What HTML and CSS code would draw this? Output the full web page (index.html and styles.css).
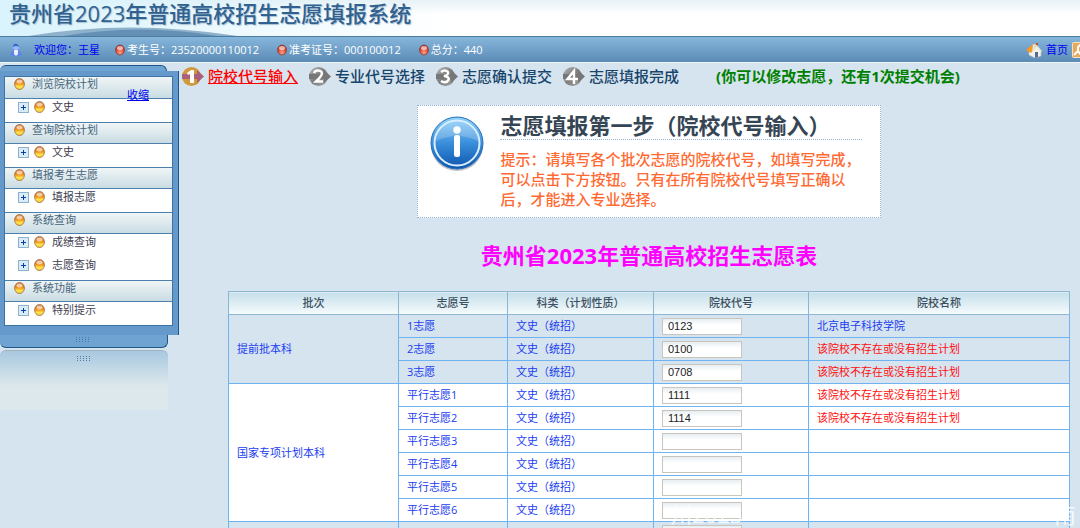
FILE: index.html
```html
<!DOCTYPE html>
<html lang="zh-CN">
<head>
    <meta charset="UTF-8">
    <title>贵州省2023年普通高校招生志愿填报系统</title>
    <link rel="stylesheet" href="styles.css">
</head>
<body>

    <!-- shared icons -->
    <svg class="defs" width="0" height="0" aria-hidden="true">
        <defs>
            <radialGradient id="redFill" cx="50%" cy="75%" r="75%">
                <stop offset="0" stop-color="#ffa48e"/><stop offset="0.5" stop-color="#e0523c"/><stop offset="1" stop-color="#a8281c"/>
            </radialGradient>
            <linearGradient id="goldFill" x1="0" y1="0" x2="0" y2="1">
                <stop offset="0" stop-color="#c96a2c"/><stop offset="0.45" stop-color="#f08c10"/><stop offset="0.75" stop-color="#ffe850"/><stop offset="1" stop-color="#f8c030"/>
            </linearGradient>
            <linearGradient id="blueFill" x1="0" y1="0" x2="0" y2="1">
                <stop offset="0" stop-color="#8fd2fb"/><stop offset="0.5" stop-color="#3a8edb"/><stop offset="1" stop-color="#0d55ad"/>
            </linearGradient>
            <linearGradient id="grayFill" x1="0" y1="0" x2="1" y2="1">
                <stop offset="0" stop-color="#b5b5b5"/><stop offset="0.5" stop-color="#7d7d7d"/><stop offset="1" stop-color="#a5a5a5"/>
            </linearGradient>
            <symbol id="redDot" viewBox="0 0 10 12">
                <ellipse cx="5" cy="6" rx="4.5" ry="5" fill="url(#redFill)" stroke="#8d3a34" stroke-width="0.7"/>
                <ellipse cx="5" cy="4" rx="3" ry="2" fill="#fff" opacity="0.6"/>
            </symbol>
            <symbol id="goldDot" viewBox="0 0 11 12">
                <ellipse cx="5.5" cy="6" rx="4.9" ry="5.5" fill="url(#goldFill)" stroke="#9a6a48" stroke-width="0.8"/>
                <ellipse cx="5.5" cy="3.6" rx="3" ry="2" fill="#fff" opacity="0.6"/>
            </symbol>
            <symbol id="plus" viewBox="0 0 11 11">
                <rect x="0.5" y="0.5" width="10" height="10" fill="#d8ecf8" stroke="#8fb2cc"/>
                <path d="M5.5 3v5M3 5.5h5" stroke="#0b3fa5"/>
            </symbol>
        </defs>
    </svg>

    <header class="banner">
        <svg class="hill" viewBox="0 0 210 9" preserveAspectRatio="none" aria-hidden="true">
            <path d="M0 9Q100-8 210 9z" fill="#8fb2cc"/>
            <path d="M35 9Q112-4 190 9z" fill="#6590b5"/>
        </svg>
        <h1>贵州省2023年普通高校招生志愿填报系统</h1>
    </header>

    <div class="userbar">
        <svg width="14" height="14" viewBox="0 0 14 14" aria-hidden="true">
            <path d="M1 12Q2 7 7 6Q12 7 13 12Q7 15 1 12z" fill="#5f86e8"/>
            <circle cx="7" cy="4" r="3" fill="#9db8f7"/>
            <path d="M4 4Q4 0 8 1Q10 2 10 4Q7 2 4 4z" fill="#3c62cf"/>
            <path d="M5 7h4v4l-2 2-2-2z" fill="#e8f1ff"/>
        </svg>
        <span class="welcome">欢迎您：王星</span>
        <span class="info"><svg width="10" height="12"><use href="#redDot"/></svg>考生号：23520000110012</span>
        <span class="info"><svg width="10" height="12"><use href="#redDot"/></svg>准考证号：000100012</span>
        <span class="info"><svg width="10" height="12"><use href="#redDot"/></svg>总分：440</span>
        <nav class="userlinks">
            <svg width="16" height="16" viewBox="0 0 16 16" aria-hidden="true">
                <path d="M3 8l7-5 5 6v5l-6 2-6-3z" fill="#f1f1ec" stroke="#b9bcb8" stroke-width="0.5"/>
                <path d="M0 8L7 2l4 1-6 8z" fill="#f59b22"/>
                <path d="M10 1h2v4l-2-1z" fill="#c1502a"/>
                <path d="M7 2l4 1 5 6-1 1-5-6-4 6z" fill="#e2e2dd"/>
                <path d="M9 10h3v5l-3 1z" fill="#546b93"/>
            </svg>
            <a href="#">首页</a>
            <svg width="16" height="16" viewBox="0 0 16 16" aria-hidden="true">
                <rect x="0.5" y="0.5" width="15" height="15" rx="1" fill="#e7a95c" stroke="#f5e3c8"/>
                <path d="M2 13l4-4V5l2-2h4M6 9l3 4" fill="none" stroke="#fff" stroke-width="2"/>
            </svg>
        </nav>
    </div>

    <div class="page">
        <aside class="sidebar">
            <div class="side-top"></div>
            <div class="side-body">
                <a class="collapse" href="#">收缩</a>
                <ul class="menu">
                    <li class="group"><svg width="11" height="12"><use href="#goldDot"/></svg>浏览院校计划</li>
                    <li class="item"><svg width="11" height="11"><use href="#plus"/></svg><svg width="11" height="12"><use href="#goldDot"/></svg>文史</li>
                    <li class="group"><svg width="11" height="12"><use href="#goldDot"/></svg>查询院校计划</li>
                    <li class="item"><svg width="11" height="11"><use href="#plus"/></svg><svg width="11" height="12"><use href="#goldDot"/></svg>文史</li>
                    <li class="group"><svg width="11" height="12"><use href="#goldDot"/></svg>填报考生志愿</li>
                    <li class="item"><svg width="11" height="11"><use href="#plus"/></svg><svg width="11" height="12"><use href="#goldDot"/></svg>填报志愿</li>
                    <li class="group"><svg width="11" height="12"><use href="#goldDot"/></svg>系统查询</li>
                    <li class="item"><svg width="11" height="11"><use href="#plus"/></svg><svg width="11" height="12"><use href="#goldDot"/></svg>成绩查询</li>
                    <li class="item"><svg width="11" height="11"><use href="#plus"/></svg><svg width="11" height="12"><use href="#goldDot"/></svg>志愿查询</li>
                    <li class="group"><svg width="11" height="12"><use href="#goldDot"/></svg>系统功能</li>
                    <li class="item"><svg width="11" height="11"><use href="#plus"/></svg><svg width="11" height="12"><use href="#goldDot"/></svg>特别提示</li>
                </ul>
            </div>
            <div class="side-foot"><span class="grip"></span></div>
            <div class="side-shadow"><span class="grip"></span></div>
        </aside>

        <main>
            <div class="steps">
                <span class="step active">
                    <svg width="22" height="19" viewBox="0 0 22 19" aria-hidden="true">
                        <circle cx="9.5" cy="9.5" r="9.5" fill="#d09a3c"/>
                        <path d="M0 7h15V3l7 6.5-7 6.5v-4H0z" fill="#a9607a"/>
                        <path d="M5 6l4-3h3v13H8V7L6 8z" fill="#fff"/>
                    </svg>
                    <a href="#">院校代号输入</a>
                </span>
                <span class="step">
                    <svg width="22" height="19" viewBox="0 0 22 19" aria-hidden="true">
                        <circle cx="9.5" cy="9.5" r="9.5" fill="url(#grayFill)"/>
                        <path d="M0 7h15V3l7 6.5-7 6.5v-4H0z" fill="#777"/>
                        <path d="M5 6Q6 3 9.5 3.5Q14 4 12.5 8Q11 11 7 14.5H14" fill="none" stroke="#fff" stroke-width="2.4"/>
                    </svg>
                    专业代号选择
                </span>
                <span class="step">
                    <svg width="22" height="19" viewBox="0 0 22 19" aria-hidden="true">
                        <circle cx="9.5" cy="9.5" r="9.5" fill="url(#grayFill)"/>
                        <path d="M0 7h15V3l7 6.5-7 6.5v-4H0z" fill="#777"/>
                        <path d="M5 5Q9 2 12 5Q13 8 8 9Q14 10 12.5 13Q10 17 5 14" fill="none" stroke="#fff" stroke-width="2.4"/>
                    </svg>
                    志愿确认提交
                </span>
                <span class="step">
                    <svg width="22" height="19" viewBox="0 0 22 19" aria-hidden="true">
                        <circle cx="9.5" cy="9.5" r="9.5" fill="url(#grayFill)"/>
                        <path d="M0 7h15V3l7 6.5-7 6.5v-4H0z" fill="#777"/>
                        <path d="M11 17V4L4.5 12H15" fill="none" stroke="#fff" stroke-width="2.4"/>
                    </svg>
                    志愿填报完成
                </span>
                <strong class="chance">(你可以修改志愿，还有1次提交机会)</strong>
            </div>

            <div class="content">
                <section class="notice">
                    <svg width="58" height="58" viewBox="0 0 58 58" aria-hidden="true">
                        <ellipse cx="29" cy="31" rx="26" ry="25" fill="#7f8b96" opacity="0.5"/>
                        <circle cx="29" cy="28" r="26" fill="url(#blueFill)" stroke="#2a71b8"/>
                        <circle cx="29" cy="28" r="22.5" fill="none" stroke="#d9efff" stroke-width="2"/>
                        <path d="M8 26Q29 16 50 26Q50 7 29 7Q8 7 8 26z" fill="#fff" opacity="0.2"/>
                        <circle cx="29" cy="15" r="3.7" fill="#fff"/>
                        <rect x="26" y="20" width="6" height="22" rx="2.5" fill="#fff"/>
                    </svg>
                    <div class="notice-text">
                        <h2>志愿填报第一步（院校代号输入）</h2>
                        <p>提示：请填写各个批次志愿的院校代号，如填写完成，可以点击下方按钮。只有在所有院校代号填写正确以后，才能进入专业选择。</p>
                    </div>
                </section>

                <h2 class="form-title">贵州省2023年普通高校招生志愿表</h2>

                <table class="wishes">
                    <thead>
                        <tr>
                            <th class="col-batch">批次</th>
                            <th class="col-no">志愿号</th>
                            <th class="col-type">科类（计划性质）</th>
                            <th class="col-code">院校代号</th>
                            <th>院校名称</th>
                        </tr>
                    </thead>
                    <tbody>
                        <tr><td rowspan="3">提前批本科</td><td>1志愿</td><td>文史（统招）</td><td><input type="text" aria-label="1志愿院校代号" value="0123"></td><td>北京电子科技学院</td></tr>
                        <tr><td>2志愿</td><td>文史（统招）</td><td><input type="text" aria-label="2志愿院校代号" value="0100"></td><td class="error">该院校不存在或没有招生计划</td></tr>
                        <tr><td>3志愿</td><td>文史（统招）</td><td><input type="text" aria-label="3志愿院校代号" value="0708"></td><td class="error">该院校不存在或没有招生计划</td></tr>
                    </tbody>
                    <tbody class="white">
                        <tr><td rowspan="6">国家专项计划本科</td><td>平行志愿1</td><td>文史（统招）</td><td><input type="text" aria-label="平行志愿1院校代号" value="1111"></td><td class="error">该院校不存在或没有招生计划</td></tr>
                        <tr><td>平行志愿2</td><td>文史（统招）</td><td><input type="text" aria-label="平行志愿2院校代号" value="1114"></td><td class="error">该院校不存在或没有招生计划</td></tr>
                        <tr><td>平行志愿3</td><td>文史（统招）</td><td><input type="text" aria-label="平行志愿3院校代号"></td><td></td></tr>
                        <tr><td>平行志愿4</td><td>文史（统招）</td><td><input type="text" aria-label="平行志愿4院校代号"></td><td></td></tr>
                        <tr><td>平行志愿5</td><td>文史（统招）</td><td><input type="text" aria-label="平行志愿5院校代号"></td><td></td></tr>
                        <tr><td>平行志愿6</td><td>文史（统招）</td><td><input type="text" aria-label="平行志愿6院校代号"></td><td></td></tr>
                    </tbody>
                    <tbody>
                        <tr><td></td><td></td><td></td><td><input type="text" aria-label="院校代号"></td><td></td></tr>
                    </tbody>
                </table>
            </div>
        </main>
    </div>

    <div class="watermark"><span>州2023</span><span>南</span></div>

</body>
</html>
```

FILE: styles.css
```css
* {
    box-sizing: border-box;
}

body {
    margin: 0;
    height: 100vh;
    overflow: hidden;
    position: relative;
    background-color: #d6e4ef;
    font-family: "Open Sans", "Noto Sans CJK SC", sans-serif;
    font-size: 11px;
    line-height: 16px;
}

svg {
    flex: none;
}

.defs {
    position: absolute;
}

/* top banner */
.banner {
    position: relative;
    height: 36px;
    padding-left: 9px;
    background: linear-gradient(to right, #d9f3fc, rgba(255, 255, 255, 0) 42%), linear-gradient(#e8f2f6, #fff 14px);
}

.banner h1 {
    position: relative;
    margin: 0;
    font-size: 22px;
    line-height: 26px;
    font-weight: 500;
    color: #30618f;
    white-space: nowrap;
    text-shadow: 1px 1px 1px #a9c3d6;
}

.hill {
    position: absolute;
    left: 28px;
    bottom: 0;
    width: 210px;
    height: 9px;
}

.userbar {
    display: flex;
    align-items: center;
    height: 27px;
    padding-left: 9px;
    border-top: 1px solid #4b7ca0;
    border-bottom: 1px solid #eef5fb;
    background: linear-gradient(#86b6db, #5c8cb6);
    color: white;
    white-space: nowrap;
    overflow: hidden;
}

.welcome {
    margin-left: 11px;
    margin-right: 15px;
    color: #0000f0;
}

.info {
    display: flex;
    align-items: center;
    gap: 2px;
    margin-right: 18px;
}

.userlinks {
    display: flex;
    align-items: center;
    gap: 4px;
    margin-left: auto;
    margin-right: -8px;
}

.userlinks a {
    color: #0000f0;
    text-decoration: none;
}

.page {
    display: flex;
    align-items: flex-start;
    padding-top: 2px;
}

/* left menu */
.sidebar {
    width: 179px;
    flex: none;
}

.side-top {
    width: 167px;
    height: 6px;
    border-top: 1px solid #1f5888;
    border-right: 1px solid #1f5888;
    border-radius: 6px 6px 0 0;
    background-color: #6fa3d1;
}

.side-body {
    position: relative;
    padding: 5px 5px 9px 4px;
    border-right: 1px solid #1f5888;
    background-color: #6699cb;
}

.collapse {
    position: absolute;
    left: 127px;
    top: 16px;
    color: #0000f0;
}

.menu {
    margin: 0;
    padding: 0;
    list-style: none;
    border: 1px solid #3c75a3;
    background-color: white;
}

.menu li {
    display: flex;
    align-items: center;
    padding-bottom: 7px;
}

.menu .group {
    height: 22px;
    gap: 7px;
    padding-left: 9px;
    border-bottom: 1px solid #4a80ab;
    background: linear-gradient(#f0f5f6, #c9dce3);
    color: #46657c;
}

.menu .item {
    height: 23px;
    gap: 5px;
    padding-left: 13px;
    color: #3c3c50;
}

.menu .item svg + svg {
    margin-right: 2px;
}

.menu .item + .group {
    border-top: 1px solid #4a80ab;
}

.side-foot,
.side-shadow {
    display: flex;
    justify-content: center;
    width: 168px;
}

.side-foot {
    height: 13px;
    padding-top: 2px;
    border: 1px solid #1f5888;
    border-top: none;
    border-left: none;
    border-radius: 0 0 6px 6px;
    background-color: #6fa3d1;
}

.side-shadow {
    height: 60px;
    margin-top: 2px;
    padding-top: 5px;
    border-top: 1px solid #a4b4be;
    border-radius: 6px 6px 0 0;
    background: linear-gradient(#a8c8e0, #dce8eb 35px);
}

.grip {
    width: 15px;
    height: 5px;
    background: repeating-linear-gradient(to right, #4a7ba5 0 1px, transparent 1px 3px);
    mask: repeating-linear-gradient(#000 0 1px, transparent 1px 2px);
}

main {
    flex: 1;
    min-width: 0;
}

.steps {
    display: flex;
    align-items: center;
    height: 22px;
    gap: 11px;
    padding-left: 3px;
    font-size: 15px;
    font-weight: 500;
    color: #17456b;
    white-space: nowrap;
}

.step {
    display: flex;
    align-items: center;
    gap: 4px;
}

.step.active a {
    color: red;
}

.chance {
    margin-left: 26px;
    color: green;
}

.content {
    padding: 18px 10px 0 49px;
}

.notice {
    display: flex;
    align-items: flex-start;
    gap: 14px;
    width: 55%;
    min-width: 463px;
    margin: 0 auto;
    padding: 6px 18px 8px 10px;
    border: 1px dotted #8fb4d8;
    background-color: white;
}

.notice svg {
    margin-top: 3px;
}

.notice-text {
    flex: 1;
}

.notice h2 {
    margin: 0 0 9px;
    border-bottom: 1px dotted #8fb4d8;
    font-size: 22px;
    line-height: 27px;
    color: #364554;
    white-space: nowrap;
}

.notice p {
    margin: 0;
    font-size: 15px;
    line-height: 20px;
    font-weight: 500;
    color: #ff6a33;
}

.form-title {
    margin: 23px 0 22px;
    font-size: 22px;
    line-height: 28px;
    text-align: center;
    color: magenta;
}

/* school code table */
.wishes {
    width: 100%;
    table-layout: fixed;
    border-collapse: collapse;
    color: #1a3df0;
}

.wishes th,
.wishes td {
    height: 23px;
    padding: 0 8px;
    border: 1px solid #6fb3f0;
    text-align: left;
}

.wishes th {
    border-color: #8db6d2;
    background: linear-gradient(#c5dfea, #f6fbfd);
    font-weight: 500;
    text-align: center;
    color: #3c4f60;
}

.wishes .col-batch {
    width: 170px;
}

.wishes .col-no {
    width: 109px;
}

.wishes .col-type {
    width: 146px;
}

.wishes .col-code {
    width: 155px;
}

.white {
    background-color: white;
}

.wishes .error {
    color: #ff1010;
}

.wishes input {
    display: block;
    width: 80px;
    height: 17px;
    padding: 0 5px;
    border: 1px solid #c9c5bd;
    background: linear-gradient(#e6eef2, #fff 6px);
    font-family: "Liberation Sans", sans-serif;
    font-size: 11px;
    color: #222;
}

.watermark {
    position: absolute;
    left: 670px;
    right: 4px;
    bottom: 0;
    display: flex;
    justify-content: space-between;
    font-size: 22px;
    line-height: 28px;
    color: rgba(255, 255, 255, 0.8);
    pointer-events: none;
}
```
